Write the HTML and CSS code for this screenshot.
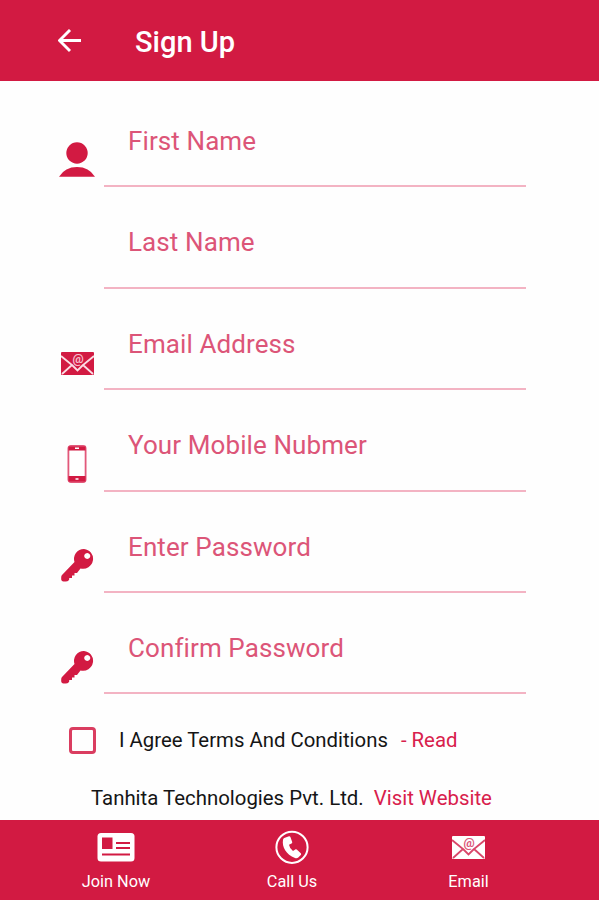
FILE: index.html
```html
<!DOCTYPE html>
<html lang="en">
<head>
    <meta charset="UTF-8">
    <meta name="viewport" content="width=device-width, initial-scale=1.0">
    <link rel="stylesheet" href="styles.css">
    <title>Sign Up</title>
</head>
<body>
    <header class="topbar">
        <svg class="back" width="24" height="24" viewBox="0 0 24 24">
            <path d="M23 11.5H2M12 1L1.5 11.5L12 22" />
        </svg>
        <h1 class="title">Sign Up</h1>
    </header>

    <form class="signup">
        <div class="row">
            <div class="icon">
                <svg width="36" height="36" viewBox="0 0 36 36">
                    <circle cx="18" cy="11" r="10.7" />
                    <path d="M0 34.7Q6 25 18 25T36 34.7Z" />
                </svg>
            </div>
            <div class="field"><span class="hint first-name">First Name</span></div>
        </div>

        <div class="row">
            <div class="icon"></div>
            <div class="field"><span class="hint last-name">Last Name</span></div>
        </div>

        <div class="row">
            <div class="icon">
                <svg class="mail" width="33" height="23" viewBox="0 0 33 23">
                    <rect width="33" height="23" rx="1" />
                    <path class="fold" d="M0 4L11 13L1 22M33 4L22 13L32 22M11 13L16.5 18.5L22 13" />
                    <text class="at" x="17" y="11">@</text>
                </svg>
            </div>
            <div class="field"><span class="hint email">Email Address</span></div>
        </div>

        <div class="row">
            <div class="icon">
                <svg width="20" height="38" viewBox="0 0 20 38">
                    <rect class="phone-body" x="1.4" y="1" width="17.2" height="36" rx="2.5" />
                    <path d="M1.5 1.5H18.5V5.5H1.5ZM1.5 31H18.5V36.5H1.5Z" />
                    <path class="phone-marks" d="M8 3.2H12M8.5 34H11.5" />
                </svg>
            </div>
            <div class="field"><span class="hint mobile">Your Mobile Nubmer</span></div>
        </div>

        <div class="row">
            <div class="icon">
                <svg width="33" height="33" viewBox="0 0 33 33">
                    <path fill-rule="evenodd" d="M23 0A9.9 9.9 0 0 0 13.5 13L1 26Q0.2 26.8 0.2 28.5V30.5Q0.5 32.5 2.5 32.5H5Q7.5 32.5 8.2 30.5V29H11V26.5H13.5V24H16L19.5 19.4A9.9 9.9 0 1 0 23 0ZM26.3 4A3 3 0 1 1 26.2 4Z" />
                </svg>
            </div>
            <div class="field"><span class="hint password">Enter Password</span></div>
        </div>

        <div class="row">
            <div class="icon">
                <svg width="33" height="33" viewBox="0 0 33 33">
                    <path fill-rule="evenodd" d="M23 0A9.9 9.9 0 0 0 13.5 13L1 26Q0.2 26.8 0.2 28.5V30.5Q0.5 32.5 2.5 32.5H5Q7.5 32.5 8.2 30.5V29H11V26.5H13.5V24H16L19.5 19.4A9.9 9.9 0 1 0 23 0ZM26.3 4A3 3 0 1 1 26.2 4Z" />
                </svg>
            </div>
            <div class="field"><span class="hint confirm">Confirm Password</span></div>
        </div>

        <div class="agree">
            <span class="checkbox"></span>
            <span class="terms">I Agree Terms And Conditions</span>
            <a class="link read">- Read</a>
        </div>
    </form>

    <div class="company">
        <span class="company-name">Tanhita Technologies Pvt. Ltd.</span>
        <a class="link visit">Visit Website</a>
    </div>

    <footer class="bottombar">
        <a class="tab join">
            <svg width="38" height="34" viewBox="0 0 38 34">
                <rect x="0.5" y="3" width="37" height="28.5" rx="3.5" />
                <path class="cut" d="M5 7.5H15.5V19H5ZM19 12H33V14H19ZM19 17H33V19H19ZM5 23.5H33V25.5H5Z" />
            </svg>
            <span class="tab-text">Join Now</span>
        </a>
        <a class="tab call">
            <svg width="34" height="34" viewBox="0 0 34 34">
                <circle class="ring" cx="17" cy="17.3" r="15.6" />
                <path d="M9.2 8L14 6.2Q15 6 15.4 7L17.2 12Q17.4 13 16.5 13.5L14 14.8Q14.5 18.4 18 21L20.2 19.4Q21 19 21.8 19.6L25.8 23.3Q26.5 24.2 25.8 25L23 27.8Q21.7 28.6 20 28C11 24.4 6.8 17 8 9.7Q8.2 8.5 9.2 8Z" />
            </svg>
            <span class="tab-text">Call Us</span>
        </a>
        <a class="tab contact">
            <svg class="mail" width="33" height="34" viewBox="0 -6 33 34">
                <rect width="33" height="23" rx="1" />
                <path class="fold" d="M0 4L11 13L1 22M33 4L22 13L32 22M11 13L16.5 18.5L22 13" />
                <text class="at" x="17" y="11">@</text>
            </svg>
            <span class="tab-text">Email</span>
        </a>
    </footer>
</body>
</html>
```

FILE: styles.css
```css
* {
    box-sizing: border-box;
}

body {
    margin: 0;
    height: 900px;
    display: flex;
    flex-direction: column;
    overflow: hidden;
    background-color: #fefefe;
    font-family: Roboto, "Liberation Sans", sans-serif;
    color: #151515;
}

/* header */
.topbar {
    height: 81px;
    display: flex;
    align-items: center;
    gap: 53px;
    padding-left: 58px;
    background-color: #d21a42;
}

.back {
    fill: none;
    stroke: #fff;
    stroke-width: 2.9;
}

.title {
    margin: 0;
    padding-top: 2px;
    font-size: 29px;
    font-weight: 500;
    color: #fff;
}

/* form */
.signup {
    padding: 5.1px 73px 0 50px;
}

.row {
    display: flex;
    height: 101.4px;
}

.icon {
    width: 54px;
    padding-top: 47px;
    display: flex;
    align-items: center;
    justify-content: center;
    fill: #d21a42;
}

.field {
    flex: 1;
    padding: 40px 0 0 24px;
    border-bottom: 2px solid #f3b3c3;
}

.hint {
    font-size: 26px;
    line-height: 31px;
    letter-spacing: 0.1px;
    color: #dc5578;
    white-space: nowrap;
}

.fold {
    fill: none;
    stroke: #fbdde4;
    stroke-width: 1.8;
}

.at {
    font-size: 12.5px;
    font-weight: 700;
    text-anchor: middle;
    fill: #f6bccb;
}

.phone-body {
    fill: #fff;
    stroke: #e2587a;
    stroke-width: 1.8;
}

.phone-marks {
    stroke: #fff;
    stroke-width: 1.5;
}

.agree {
    display: flex;
    align-items: center;
    padding-left: 19px;
    height: 92px;
    font-size: 20.35px;
}

.checkbox {
    width: 27px;
    height: 27px;
    margin-right: 23px;
    border: 3px solid #da3d60;
    border-radius: 4px;
}

.terms {
    margin-right: 13px;
}

.link {
    color: #d8204c;
}

.company {
    display: flex;
    gap: 10px;
    padding-left: 91px;
    font-size: 20.4px;
    line-height: 25px;
}

/* bottom menu */
.bottombar {
    display: flex;
    height: 80px;
    margin-top: auto;
    background-color: #d21a42;
}

.tab {
    display: flex;
    flex-direction: column;
    align-items: center;
    padding-top: 10px;
    fill: #fff;
    color: #fff;
}

.join {
    width: 232px;
}

.call {
    width: 120px;
}

.contact {
    width: 233px;
}

.cut {
    fill: #d21a42;
}

.ring {
    fill: none;
    stroke: #fff;
    stroke-width: 2;
}

.contact .fold {
    stroke: #d9476a;
}

.contact .at {
    fill: #dc5578;
}

.tab-text {
    margin-top: 8px;
    font-size: 16.3px;
    line-height: 19px;
}
```
